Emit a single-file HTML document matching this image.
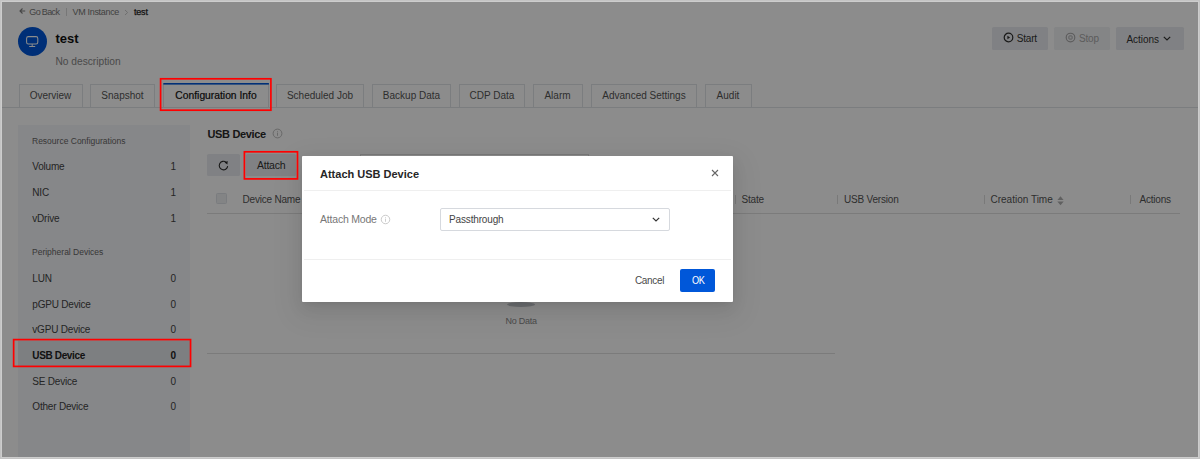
<!DOCTYPE html>
<html><head><meta charset="utf-8">
<style>
*{box-sizing:border-box;margin:0;padding:0}
html,body{width:1200px;height:459px;overflow:hidden;background:#fff}
body{position:relative;font-family:"Liberation Sans",sans-serif;color:#333}
.a{position:absolute;white-space:nowrap}
.t{position:absolute;white-space:nowrap;line-height:1}
.btn{position:absolute;background:#eaecf0;border-radius:1.5px}
.tab{position:absolute;top:84px;height:23px;border:1px solid #e0e3e8;border-bottom:none;background:#fff;font-size:10px;color:#555;text-align:center;line-height:22px}
.side{position:absolute;left:18px;top:125px;width:172px;height:332px;background:#f5f6fa}
.row{position:absolute;left:32.3px;font-size:10px;letter-spacing:-0.2px;color:#444;line-height:1}
.num{position:absolute;left:170.6px;font-size:10px;color:#444;line-height:1}
.grp{position:absolute;left:32px;font-size:8.5px;color:#666;line-height:1}
.th{position:absolute;top:194.5px;font-size:10px;letter-spacing:-0.2px;color:#555;line-height:1}
.sep{position:absolute;top:195px;width:1px;height:9px;background:#ddd}
.mask{position:absolute;left:0;top:0;width:1200px;height:459px;background:rgba(0,0,0,0.45)}
.red{position:absolute;border:2px solid #ff0000}
</style></head><body>
<!-- breadcrumb -->
<svg class="a" style="left:18.5px;top:7.3px" width="8" height="8" viewBox="0 0 8 8"><path d="M6.2 4H1M3.5 1.5L1 4l2.5 2.5" fill="none" stroke="#808080" stroke-width="1.1"/></svg>
<div class="t" style="left:29.3px;top:7.7px;font-size:9px;color:#777;letter-spacing:-0.65px">Go Back</div>
<div class="a" style="left:66px;top:8px;width:1px;height:8px;background:#d9d9d9"></div>
<div class="t" style="left:72.6px;top:8px;font-size:9px;color:#777;letter-spacing:-0.33px">VM Instance</div>
<svg class="a" style="left:124px;top:9px" width="5" height="7" viewBox="0 0 5 7"><path d="M1 1l2.6 2.5L1 6" fill="none" stroke="#c4c4c4" stroke-width="0.9"/></svg>
<div class="t" style="left:134px;top:8px;font-size:9px;color:#222;letter-spacing:-0.2px;-webkit-text-stroke:0.25px #222">test</div>
<!-- avatar -->
<div class="a" style="left:18px;top:27px;width:29px;height:29px;border-radius:50%;background:#0057d9"></div>
<svg class="a" style="left:26px;top:36px" width="13" height="11" viewBox="0 0 13 11"><rect x="0.6" y="0.6" width="11.2" height="7.4" rx="1.8" fill="none" stroke="#fff" stroke-width="1.05"/><path d="M6.2 8.1v2.3M3.2 10.5h6" stroke="#fff" stroke-width="1" fill="none"/></svg>
<div class="t" style="left:55.5px;top:31.5px;font-size:13px;font-weight:bold;color:#111">test</div>
<div class="t" style="left:55.5px;top:57px;font-size:10.2px;color:#888">No description</div>
<!-- top buttons -->
<div class="btn" style="left:992px;top:27px;width:56px;height:23px"></div>
<svg class="a" style="left:1003px;top:32.2px" width="11" height="11" viewBox="0 0 11 11"><circle cx="5.5" cy="5.5" r="4.3" fill="none" stroke="#2e2e2e" stroke-width="1.2"/><path d="M4.4 3.7v3.6l2.7-1.8z" fill="#2e2e2e"/></svg>
<div class="t" style="left:1016.8px;top:34.2px;font-size:10px;letter-spacing:-0.2px;color:#333">Start</div>
<div class="btn" style="left:1054px;top:27px;width:56px;height:23px;background:#f1f2f5"></div>
<svg class="a" style="left:1064.6px;top:32.2px" width="11" height="11" viewBox="0 0 11 11"><circle cx="5.5" cy="5.5" r="4.3" fill="none" stroke="#a8a8a8" stroke-width="1.15"/><rect x="3.9" y="3.9" width="3.2" height="3.2" rx="0.6" fill="none" stroke="#a8a8a8" stroke-width="1"/></svg>
<div class="t" style="left:1079px;top:34.2px;font-size:10px;letter-spacing:-0.2px;color:#a8a8a8">Stop</div>
<div class="btn" style="left:1115.5px;top:27.3px;width:68.5px;height:22.6px"></div>
<div class="t" style="left:1126.5px;top:34.5px;font-size:10px;letter-spacing:-0.05px;color:#333">Actions</div>
<svg class="a" style="left:1163.3px;top:35.6px" width="8" height="5" viewBox="0 0 8 5"><path d="M0.8 0.8l3.2 3.2 3.2-3.2" fill="none" stroke="#333" stroke-width="1.2"/></svg>
<!-- tabs -->
<div class="a" style="left:0;top:107px;width:1200px;height:352px;background:#fff"></div>
<div class="a" style="left:0;top:106.5px;width:1200px;height:1px;background:#e0e3e8"></div>
<div class="tab" style="left:18.5px;width:64px">Overview</div>
<div class="tab" style="left:90px;width:65px">Snapshot</div>
<div class="tab" style="left:163px;width:106px;color:#111;font-size:10.3px;-webkit-text-stroke:0.2px #111;border-top:none;background:#fff;height:23px;line-height:24px;top:84px">Configuration Info</div>
<svg class="a" style="left:160px;top:80px" width="112" height="8" viewBox="160 80 112 8"><rect x="163.3" y="83.0" width="105.6" height="1.6" fill="#0057d9"/></svg>
<div class="tab" style="left:276px;width:88px">Scheduled Job</div>
<div class="tab" style="left:372px;width:79px">Backup Data</div>
<div class="tab" style="left:459px;width:66px">CDP Data</div>
<div class="tab" style="left:532.5px;width:50px">Alarm</div>
<div class="tab" style="left:591px;width:106px">Advanced Settings</div>
<div class="tab" style="left:704.5px;width:47px">Audit</div>
<!-- sidebar -->
<div class="side"></div>
<div class="grp" style="top:136.5px">Resource Configurations</div>
<div class="row" style="top:162px">Volume</div><div class="num" style="top:162px">1</div>
<div class="row" style="top:188px">NIC</div><div class="num" style="top:188px">1</div>
<div class="row" style="top:213.5px">vDrive</div><div class="num" style="top:213.5px">1</div>
<div class="grp" style="top:248px">Peripheral Devices</div>
<div class="row" style="top:273.5px">LUN</div><div class="num" style="top:273.5px">0</div>
<div class="row" style="top:299.5px">pGPU Device</div><div class="num" style="top:299.5px">0</div>
<div class="row" style="top:325px">vGPU Device</div><div class="num" style="top:325px">0</div>
<div class="a" style="left:18px;top:340.5px;width:172px;height:26px;background:#e4e7ec"></div>
<div class="row" style="top:350.5px;font-weight:bold;color:#222;letter-spacing:-0.35px">USB Device</div><div class="num" style="top:350.5px;font-weight:bold;color:#222">0</div>
<div class="row" style="top:376.5px">SE Device</div><div class="num" style="top:376.5px">0</div>
<div class="row" style="top:402px">Other Device</div><div class="num" style="top:402px">0</div>
<!-- content -->
<div class="t" style="left:207.5px;top:128.7px;font-size:11px;font-weight:bold;color:#2a2a2a;letter-spacing:-0.35px">USB Device</div>
<svg class="a" style="left:272px;top:128.3px" width="11" height="11" viewBox="0 0 11 11"><circle cx="5.5" cy="5.5" r="4.4" fill="none" stroke="#b4b4b4" stroke-width="0.9"/><path d="M5.5 4.6v3.2M5.5 3.1v0.7" stroke="#b8b8b8" stroke-width="0.9"/></svg>
<div class="btn" style="left:207px;top:154px;width:33px;height:22px"></div>
<svg class="a" style="left:218px;top:160px" width="11" height="11" viewBox="0 0 11 11"><path d="M9.7 6.2A4.25 4.25 0 1 1 8.2 2.3" fill="none" stroke="#2a2a2a" stroke-width="1.1"/><path d="M6.5 2.4L9.7 0.9 9.4 4.4z" fill="#2a2a2a"/></svg>
<div class="btn" style="left:246px;top:154px;width:50px;height:22px"></div>
<div class="t" style="left:257px;top:160px;font-size:10.5px;letter-spacing:-0.25px;color:#333">Attach</div>
<div class="a" style="left:360px;top:154px;width:229px;height:22px;border:1px solid #dcdcdc;background:#fff"></div>
<!-- table -->
<div class="a" style="left:216px;top:193.3px;width:11.2px;height:11.2px;border:1px solid #dfe2e7;border-radius:1.5px;background:#eef0f3"></div>
<div class="th" style="left:242.5px">Device Name</div>
<div class="sep" style="left:735px"></div><div class="th" style="left:741.5px">State</div>
<div class="sep" style="left:837px"></div><div class="th" style="left:844px">USB Version</div>
<div class="sep" style="left:984px"></div><div class="th" style="left:990.5px;letter-spacing:0">Creation Time</div>
<svg class="a" style="left:1057.2px;top:195.5px" width="7" height="10" viewBox="0 0 7 10"><path d="M3.5 0.3L6.6 3.9H0.4zM3.5 9.3L6.7 5.6H0.3z" fill="#b0b0b0"/></svg>
<div class="sep" style="left:1130px"></div><div class="th" style="left:1139.5px">Actions</div>
<div class="a" style="left:207px;top:213px;width:973px;height:1px;background:#e0e0e0"></div>
<div class="a" style="left:506.5px;top:302px;width:28.5px;height:5px;border-radius:50%;background:#c4c7cc"></div>
<div class="t" style="left:505.5px;top:316.5px;font-size:9px;letter-spacing:-0.25px;color:#888">No Data</div>
<div class="a" style="left:207px;top:353px;width:628px;height:1px;background:#e0e0e0"></div>
<!-- mask -->
<div class="mask"></div>
<!-- modal -->
<div class="a" style="left:302.2px;top:155.7px;width:430.5px;height:146.3px;background:#fff;border-radius:1px;box-shadow:0 3px 6px -4px rgba(0,0,0,.12),0 6px 16px 0 rgba(0,0,0,.08),0 9px 28px 8px rgba(0,0,0,.05)"></div>
<div class="t" style="left:320px;top:169px;font-size:11px;font-weight:bold;color:#262626;letter-spacing:0px">Attach USB Device</div>
<svg class="a" style="left:711.3px;top:169.3px" width="8" height="8" viewBox="0 0 8 8"><path d="M1 1l6 6M7 1l-6 6" stroke="#666" stroke-width="1.1"/></svg>
<div class="a" style="left:304.3px;top:189.5px;width:426.7px;height:1px;background:#efefef"></div>
<div class="t" style="left:320px;top:214px;font-size:10.5px;letter-spacing:-0.2px;color:#777">Attach Mode</div>
<svg class="a" style="left:380.2px;top:213.6px" width="11" height="11" viewBox="0 0 11 11"><circle cx="5.5" cy="5.5" r="4.25" fill="none" stroke="#c4c4c4" stroke-width="0.9"/><path d="M5.5 4.6v3.2M5.5 3.1v0.7" stroke="#c8c8c8" stroke-width="0.9"/></svg>
<div class="a" style="left:440px;top:207.5px;width:229.5px;height:23px;border:1px solid #d6d9de;border-radius:2px;background:#fff"></div>
<div class="t" style="left:449px;top:214.5px;font-size:10px;letter-spacing:-0.15px;color:#444">Passthrough</div>
<svg class="a" style="left:651.8px;top:216.5px" width="8" height="5" viewBox="0 0 8 5"><path d="M0.8 0.8l3.2 3.2 3.2-3.2" fill="none" stroke="#333" stroke-width="1.2"/></svg>
<div class="a" style="left:304.3px;top:258.5px;width:426.7px;height:1px;background:#efefef"></div>
<div class="t" style="left:635px;top:276.3px;font-size:10px;letter-spacing:-0.35px;color:#4a4a4a">Cancel</div>
<div class="a" style="left:680px;top:269px;width:35px;height:23px;border-radius:2px;background:#0057d9"></div>
<div class="t" style="left:691.6px;top:276.2px;font-size:10.2px;letter-spacing:-0.3px;transform:scaleX(0.9);transform-origin:0 0;color:#fff">OK</div>
<!-- red annotations -->
<svg class="a" style="left:0;top:0" width="1200" height="459" viewBox="0 0 1200 459"><g fill="none" stroke="#ff0000" stroke-width="1.7"><rect x="160.6" y="78.8" width="110.3" height="31.4"/><rect x="244.4" y="151.8" width="53.1" height="27.1"/><rect x="13.65" y="339.6" width="176.9" height="26.8"/></g></svg>
<!-- frame -->
<div class="a" style="left:0;top:0;width:1200px;height:459px;border:1px solid #c4c4c4;box-shadow:inset 0 0 0 1px #cdcdcd"></div>
</body></html>
